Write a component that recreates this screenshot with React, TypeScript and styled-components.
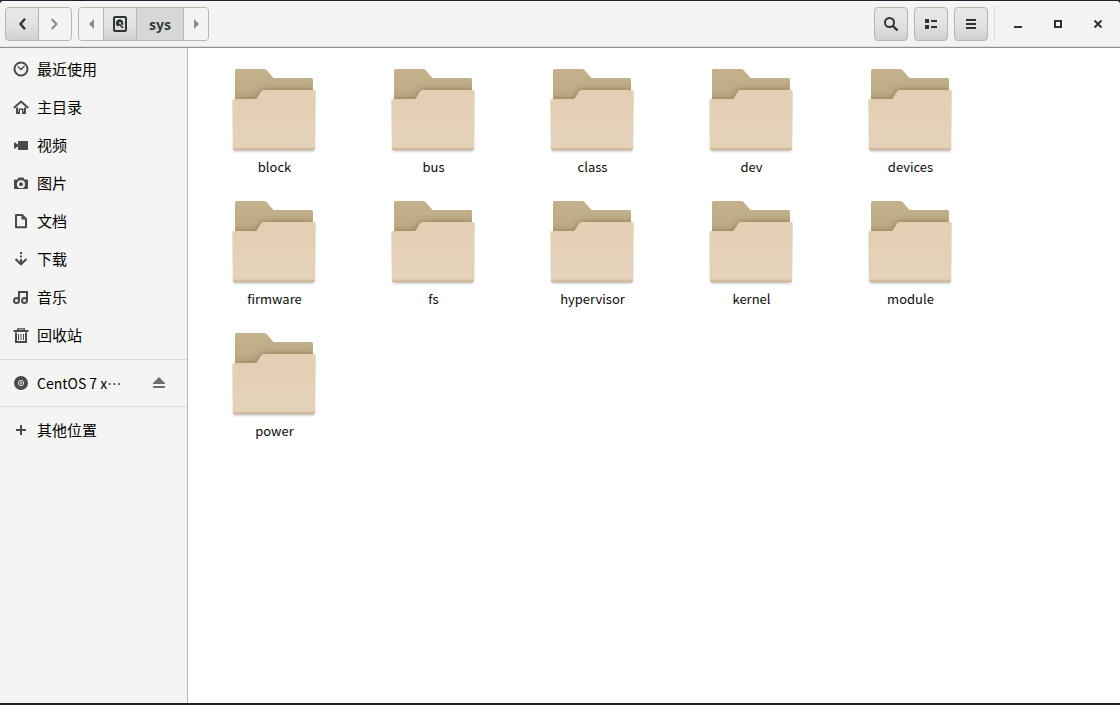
import React from "react";
import styled, { createGlobalStyle } from "styled-components";

const GlobalStyle = createGlobalStyle`
  *, *::before, *::after { box-sizing: border-box; }
  html, body, #root { height: 100%; }
  body {
    margin: 0;
    background: #16252f;
    color: #0a0a0a;
    font: 15px/20px "Noto Sans CJK SC", "Noto Sans", sans-serif;
  }
  button { font: inherit; color: inherit; cursor: default; }
  svg { display: block; flex: none; }
`;

const Desktop = styled.div`
  min-height: 100%;
  padding: 1px 0 2px;
  display: flex;
`;

const Window = styled.div`
  flex: 1;
  min-width: 0;
  display: flex;
  flex-direction: column;
  background: #fff;
  border-radius: 4px 4px 0 0;
  overflow: hidden;
`;

const HeaderBar = styled.header`
  display: flex;
  align-items: center;
  gap: 6px;
  height: 47px;
  padding: 0 2px 0 5px;
  background: linear-gradient(#faf9fa, #f3f3f3 4px);
  border-bottom: 1px solid #8e8e8a;
  box-shadow: inset 0 -1px #dededb;
`;

const Spacer = styled.div`
  flex: 1;
`;

const ButtonGroup = styled.div`
  display: flex;
  height: 34px;
  border: 1px solid #b5b5b1;
  border-radius: 4px;
  overflow: hidden;
`;

const raised = "linear-gradient(#e9e9e8, #e2e2e1 50%, #d0d0ce)";

const GroupButton = styled.button<{ $width: number; $look?: "raised" | "active" }>`
  display: flex;
  align-items: center;
  justify-content: center;
  width: ${(p) => p.$width}px;
  padding: 0;
  border: 0;
  background: ${(p) =>
    p.$look === "raised" ? raised : p.$look === "active" ? "#d7d7d6" : "#f3f3f3"};
  color: #2e3436;
  font-size: 14px;
  font-weight: 700;
  & + & { border-left: 1px solid #b5b5b1; }
`;

const ToolButton = styled.button`
  display: flex;
  align-items: center;
  justify-content: center;
  width: 34px;
  height: 34px;
  padding: 0;
  border: 1px solid #b5b5b1;
  border-radius: 4px;
  background: ${raised};
  color: #2e3436;
`;

const WindowControls = styled.div`
  display: flex;
  align-items: center;
  height: 34px;
  border-left: 1px solid #dcdcda;
  padding-left: 3px;
`;

const ControlButton = styled.button`
  display: flex;
  align-items: center;
  justify-content: center;
  width: 40px;
  height: 34px;
  padding: 0;
  border: 0;
  background: none;
  color: #2e3436;
`;

const Body = styled.div`
  flex: 1;
  display: flex;
`;

const Sidebar = styled.nav`
  flex: none;
  width: 188px;
  background: #f4f4f2;
  border-right: 1px solid #b6b6b3;
`;

const PlaceGroup = styled.ul`
  margin: 0;
  padding: 2px 0 5px;
  list-style: none;
  & + & {
    padding: 4px 0;
    border-top: 1px solid #dadad8;
  }
`;

const PlaceRow = styled.li<{ $latin?: boolean }>`
  display: flex;
  align-items: center;
  height: 38px;
  padding: 0 20px 0 13px;
  font-size: ${(p) => (p.$latin ? 14 : 15)}px;
`;

const PlaceLink = styled.a`
  flex: 1;
  min-width: 0;
  display: flex;
  align-items: center;
  gap: 8px;
  color: #000;
  text-decoration: none;
  white-space: nowrap;
  svg { color: #4a4a48; }
`;

const EjectButton = styled.button`
  display: flex;
  padding: 0;
  border: 0;
  background: none;
  color: #6b706f;
`;

const Files = styled.main`
  flex: 1;
  min-width: 0;
  padding: 21px 7px 0;
`;

const FileGrid = styled.ul`
  display: grid;
  grid-template-columns: repeat(auto-fill, 159px);
  grid-auto-rows: 132px;
  margin: 0;
  padding: 0;
  list-style: none;
  font-size: 13px;
`;

const FileItem = styled.li`
  display: flex;
  flex-direction: column;
  align-items: center;
  gap: 2px;
`;

const stroke = { fill: "none", stroke: "currentColor", strokeWidth: 2 };

const icons = {
  back: <path d="M11 2.800L6.500 8l4.500 5.200" {...stroke} strokeWidth={2.400} />,
  forward: <path d="M4.800 3l4.500 5-4.500 5" {...stroke} stroke="#8b8e8f" strokeWidth={2.200} />,
  left: <path d="M11 3v10L6 8z" fill="#8b8e8f" />,
  right: <path d="M6 3v10L11 8z" fill="#8b8e8f" />,
  disk: (
    <>
      <rect x="2" y="1" width="12" height="14" rx="1" {...stroke} />
      <path d="M8 3.200a4 4 0 0 0-2.200 7.400l1.700-1.200 2.800 3 1.500-1.400-1.300-1.400A4 4 0 0 0 8 3.200z" />
      <circle cx="8" cy="7" r="1" fill="#dededd" />
      <path d="M8 7l3.200 4" fill="none" stroke="#dededd" strokeWidth="0.800" />
    </>
  ),
  search: (
    <>
      <circle cx="6.500" cy="6.500" r="4.500" {...stroke} />
      <path d="M10 10l4.500 4.500" {...stroke} strokeWidth={2.400} />
    </>
  ),
  list: <path d="M2 3h4v4H2zM2 9h4v4H2zM8 4h6v2H8zM8 10h6v2H8z" />,
  menu: <path d="M3 3h10v2H3zM3 7h10v2H3zM3 11h10v2H3z" />,
  minimize: <path d="M4 10h8v2H4z" />,
  maximize: <path d="M5 5h6v6H5z" {...stroke} />,
  close: <path d="M4.500 4.500l7 7M11.500 4.500l-7 7" {...stroke} />,
  recent: (
    <>
      <circle cx="8" cy="8" r="6.500" {...stroke} />
      <path d="M4.800 5.500L8 8.500l3.500-3.500" {...stroke} strokeWidth={1.400} />
    </>
  ),
  home: (
    <>
      <path d="M0.800 9L8 2.600 15.200 9" {...stroke} />
      <path d="M3 8.500V15h4v-4h2v4h4V8.500h-2V13H10.500V9.500h-5V13H5V8.500z" />
    </>
  ),
  video: <path d="M5 4h9q1 0 1 1v7q0 1-1 1H5.800q-.8 0-.8-1V9.500L1 12V5l4 2.500V5z" />,
  camera: (
    <path
      fillRule="evenodd"
      d="M5.500 2.500h5l1 2H14q1 0 1 1V13q0 1-1 1H2q-1 0-1-1V5.500q0-1 1-1h2.500zM8 5.200a4 4 0 1 0 0 8 4 4 0 0 0 0-8zm0 2a2 2 0 1 1 0 4 2 2 0 0 1 0-4z"
    />
  ),
  document: (
    <>
      <path d="M3 2h6l4 4v8.200H3z" {...stroke} strokeLinejoin="round" />
      <path d="M8.500 2v4.500H13z" />
    </>
  ),
  download: (
    <>
      <path d="M7 1h2v2H7zM7 4.500h2v2H7zM7 8h2v4H7z" />
      <path d="M2.500 8L8 13.200 13.500 8" {...stroke} strokeWidth={2.200} />
    </>
  ),
  music: (
    <>
      <circle cx="3.500" cy="11.500" r="2.500" {...stroke} />
      <circle cx="11.500" cy="11.500" r="2.500" {...stroke} />
      <path d="M6 12V3h8v9" {...stroke} />
    </>
  ),
  trash: (
    <>
      <path d="M3 5.500V15h10V5.500" {...stroke} />
      <path d="M0.500 3h15v2H0.500zM4 1.200h8V3h-1.500v-.6h-5V3H4zM5 7h1v6H5zM7.500 7h1v6h-1zM10 7h1v6h-1z" />
    </>
  ),
  disc: (
    <>
      <circle cx="8" cy="8" r="7" />
      <circle cx="8" cy="8" r="2.600" fill="none" stroke="#e6e6e4" strokeWidth="1" />
      <circle cx="8" cy="8" r="1" fill="#e6e6e4" />
    </>
  ),
  plus: <path d="M7 3h2v4h4v2H9v4H7V9H3V7h4z" />,
  eject: <path d="M8 2l6 6v1H2V8zM2 11h12v2H2z" />,
};

type IconName = keyof typeof icons;

const Icon = ({ name }: { name: IconName }) => (
  <svg width="16" height="16" viewBox="0 0 16 16" fill="currentColor" aria-hidden="true">
    {icons[name]}
  </svg>
);

const backShape = "M3 1.500Q3 0 4.500 0H32q1.500 0 2.500 1l7 8H79.500Q81 9 81 10.500V32H3z";
const frontShape =
  "M0.300 31.500Q0.300 30 1.800 30H23q1.300 0 2-1l4-6.500Q30 21 31.500 21H82.300Q83.800 21 83.800 22.500L83.300 79.500Q83.300 81 81.800 81H2.200Q0.700 81 0.700 79.500z";

const Folder = ({ id }: { id: string }) => (
  <svg width="89" height="86" viewBox="-2 0 89 86" aria-hidden="true">
    <defs>
      <linearGradient id={`${id}-front`} x1="0" y1="0" x2="0" y2="1">
        <stop offset="0" stopColor="#e3cfb3" />
        <stop offset="0.940" stopColor="#e4d2b9" />
        <stop offset="0.970" stopColor="#dcc5a6" />
        <stop offset="1" stopColor="#c9ae8c" />
      </linearGradient>
      <linearGradient id={`${id}-back`} x1="0" y1="0" x2="0" y2="1">
        <stop offset="0" stopColor="#c4b28c" />
        <stop offset="1" stopColor="#bba982" />
      </linearGradient>
      <filter id={`${id}-soft`} x="-20%" y="-20%" width="140%" height="140%">
        <feGaussianBlur stdDeviation="3" />
      </filter>
      <filter id={`${id}-drop`} x="-10%" y="-10%" width="120%" height="120%">
        <feGaussianBlur stdDeviation="1" />
      </filter>
      <clipPath id={`${id}-clip`}>
        <path d={backShape} />
      </clipPath>
    </defs>
    <path d="M2 74h80v8.500H2z" fill="#000" opacity="0.250" filter={`url(#${id}-drop)`} />
    <path d={backShape} fill={`url(#${id}-back)`} />
    <g clipPath={`url(#${id}-clip)`}>
      <path d={frontShape} fill="#5c4520" opacity="0.500" filter={`url(#${id}-soft)`} />
    </g>
    <path d={frontShape} fill={`url(#${id}-front)`} />
  </svg>
);

const places: { icon: IconName; label: string }[] = [
  { icon: "recent", label: "最近使用" },
  { icon: "home", label: "主目录" },
  { icon: "video", label: "视频" },
  { icon: "camera", label: "图片" },
  { icon: "document", label: "文档" },
  { icon: "download", label: "下载" },
  { icon: "music", label: "音乐" },
  { icon: "trash", label: "回收站" },
];

const folders = [
  "block", "bus", "class", "dev", "devices",
  "firmware", "fs", "hypervisor", "kernel", "module",
  "power",
];

type PlaceProps = { icon: IconName; label: string; latin?: boolean; children?: React.ReactNode };

const Place = ({ icon, label, latin, children }: PlaceProps) => (
  <PlaceRow $latin={latin}>
    <PlaceLink href="#">
      <Icon name={icon} />
      {label}
    </PlaceLink>
    {children}
  </PlaceRow>
);

export default function App() {
  return (
    <Desktop lang="zh-CN">
      <GlobalStyle />
      <Window>
        <HeaderBar>
          <ButtonGroup>
            <GroupButton $width={32} $look="raised" aria-label="后退"><Icon name="back" /></GroupButton>
            <GroupButton $width={33} aria-label="前进"><Icon name="forward" /></GroupButton>
          </ButtonGroup>
          <ButtonGroup>
            <GroupButton $width={24} aria-label="向左"><Icon name="left" /></GroupButton>
            <GroupButton $width={33} $look="raised" aria-label="计算机"><Icon name="disk" /></GroupButton>
            <GroupButton $width={47} $look="active">sys</GroupButton>
            <GroupButton $width={25} aria-label="向右"><Icon name="right" /></GroupButton>
          </ButtonGroup>
          <Spacer />
          <ToolButton aria-label="搜索"><Icon name="search" /></ToolButton>
          <ToolButton aria-label="列表视图"><Icon name="list" /></ToolButton>
          <ToolButton aria-label="菜单"><Icon name="menu" /></ToolButton>
          <WindowControls>
            <ControlButton aria-label="最小化"><Icon name="minimize" /></ControlButton>
            <ControlButton aria-label="最大化"><Icon name="maximize" /></ControlButton>
            <ControlButton aria-label="关闭"><Icon name="close" /></ControlButton>
          </WindowControls>
        </HeaderBar>
        <Body>
          <Sidebar>
            <PlaceGroup>
              {places.map((p) => <Place key={p.label} {...p} />)}
            </PlaceGroup>
            <PlaceGroup>
              <Place icon="disc" label="CentOS 7 x…" latin>
                <EjectButton aria-label="弹出"><Icon name="eject" /></EjectButton>
              </Place>
            </PlaceGroup>
            <PlaceGroup>
              <Place icon="plus" label="其他位置" />
            </PlaceGroup>
          </Sidebar>
          <Files>
            <FileGrid>
              {folders.map((name) => (
                <FileItem key={name}>
                  <Folder id={name} />
                  <span>{name}</span>
                </FileItem>
              ))}
            </FileGrid>
          </Files>
        </Body>
      </Window>
    </Desktop>
  );
}
